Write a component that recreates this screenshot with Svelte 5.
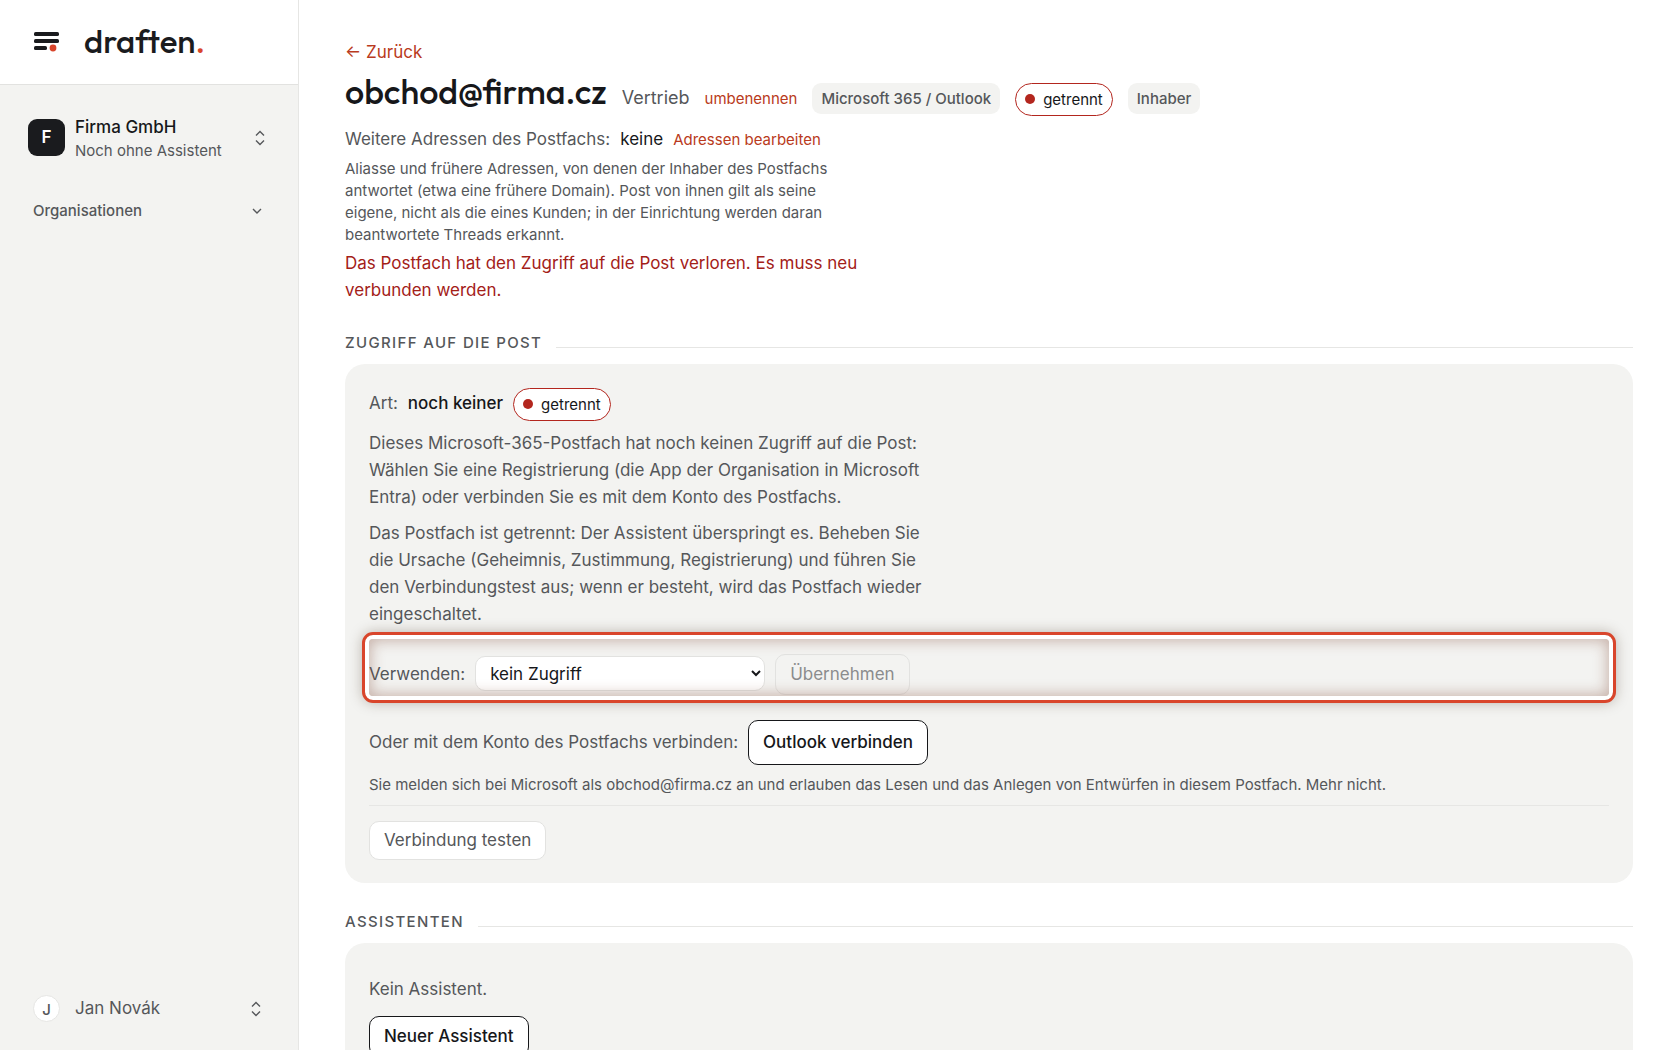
<script lang="ts">
    const organisation = { name: 'Firma GmbH', initial: 'F', note: 'Noch ohne Assistent' };
    const user = { name: 'Jan Novák', initial: 'J' };
    const mailbox = { address: 'obchod@firma.cz', label: 'Vertrieb', provider: 'Microsoft 365 / Outlook', role: 'Inhaber' };

    let access = 'none';
    let savedAccess = 'none';
</script>

{#snippet updown()}
    <svg class="icon" width="12" height="18" viewBox="0 0 12 18" aria-hidden="true">
        <path d="M2 6.5 6 2.5 10 6.5M2 11.5 6 15.5 10 11.5" />
    </svg>
{/snippet}

{#snippet disconnected()}
    <span class="status"><i></i>getrennt</span>
{/snippet}

<div class="layout">
    <aside>
        <header>
            <button class="menu" aria-label="Menü">
                <svg width="25" height="18" viewBox="0 0 25 18" aria-hidden="true">
                    <rect x="0" y="0" width="25" height="4" rx="1.6" />
                    <rect x="0" y="7" width="25" height="4" rx="1.6" />
                    <rect x="0" y="14" width="13" height="4" rx="1.6" />
                    <circle cx="19" cy="16" r="3.4" />
                </svg>
            </button>
            <a class="logo" href="#home">draften<span>.</span></a>
        </header>

        <button class="org">
            <span class="avatar">{organisation.initial}</span>
            <span class="org-text">
                <strong>{organisation.name}</strong>
                <small>{organisation.note}</small>
            </span>
            {@render updown()}
        </button>

        <button class="group">
            Organisationen
            <svg class="icon" width="12" height="8" viewBox="0 0 12 8" aria-hidden="true">
                <path d="M2 2 6 6 10 2" />
            </svg>
        </button>

        <button class="user">
            <span class="initial">{user.initial}</span>
            <span class="user-name">{user.name}</span>
            {@render updown()}
        </button>
    </aside>

    <main>
        <a class="back" href="#back">← Zurück</a>

        <div class="title">
            <h1>{mailbox.address}</h1>
            <span class="label">{mailbox.label}</span>
            <a class="small" href="#rename">umbenennen</a>
            <span class="tag">{mailbox.provider}</span>
            {@render disconnected()}
            <span class="tag">{mailbox.role}</span>
        </div>

        <div class="line addresses">
            <span>Weitere Adressen des Postfachs:</span>
            <span class="value">keine</span>
            <a class="small" href="#addresses">Adressen bearbeiten</a>
        </div>
        <p class="hint narrow">
            Aliasse und frühere Adressen, von denen der Inhaber des Postfachs antwortet (etwa eine frühere
            Domain). Post von ihnen gilt als seine eigene, nicht als die eines Kunden; in der Einrichtung
            werden daran beantwortete Threads erkannt.
        </p>
        <p class="error">Das Postfach hat den Zugriff auf die Post verloren. Es muss neu verbunden werden.</p>

        <h2>Zugriff auf die Post</h2>
        <section>
            <div class="line">
                <span>Art:</span>
                <strong>noch keiner</strong>
                {@render disconnected()}
            </div>
            <p>
                Dieses Microsoft-365-Postfach hat noch keinen Zugriff auf die Post: Wählen Sie eine
                Registrierung (die App der Organisation in Microsoft Entra) oder verbinden Sie es mit dem
                Konto des Postfachs.
            </p>
            <p>
                Das Postfach ist getrennt: Der Assistent überspringt es. Beheben Sie die Ursache (Geheimnis,
                Zustimmung, Registrierung) und führen Sie den Verbindungstest aus; wenn er besteht, wird das
                Postfach wieder eingeschaltet.
            </p>

            <form class="line highlight" on:submit|preventDefault={() => (savedAccess = access)}>
                <label for="access">Verwenden:</label>
                <select id="access" bind:value={access}>
                    <option value="none">kein Zugriff</option>
                    <option value="app">App der Organisation</option>
                </select>
                <button class="button apply" disabled={access === savedAccess}>Übernehmen</button>
            </form>

            <div class="line connect">
                <span>Oder mit dem Konto des Postfachs verbinden:</span>
                <button class="button primary">Outlook verbinden</button>
            </div>
            <p class="hint">
                Sie melden sich bei Microsoft als {mailbox.address} an und erlauben das Lesen und das Anlegen
                von Entwürfen in diesem Postfach. Mehr nicht.
            </p>
            <div class="test">
                <button class="button">Verbindung testen</button>
            </div>
        </section>

        <h2>Assistenten</h2>
        <section class="assistants">
            <p>Kein Assistent.</p>
            <button class="button primary">Neuer Assistent</button>
        </section>
    </main>
</div>

<style>
    :global(body) {
        background: #fff;
        color: #16171a;
        font: 17px/27px Inter, "Liberation Sans", sans-serif;
    }
    * {
        box-sizing: border-box;
    }
    .layout {
        display: grid;
        grid-template-columns: 299px 1fr;
        grid-template-rows: 100vh;
    }
    button, select {
        font: inherit;
        color: inherit;
    }
    a {
        color: #b93a20;
        text-decoration: none;
    }
    h1, h2, p {
        margin: 0;
        font-weight: 400;
    }
    strong {
        font-weight: 500;
        color: #16171a;
    }

    aside {
        display: flex;
        flex-direction: column;
        background: #f3f3f1;
        border-right: 1px solid #e6e6e4;
        color: #55575a;
    }
    aside button {
        display: flex;
        align-items: center;
        border: 0;
        background: none;
        text-align: left;
    }
    header {
        display: flex;
        align-items: center;
        gap: 25px;
        height: 85px;
        padding: 0 34px 2px;
        background: #fff;
        border-bottom: 1px solid #e2e2e0;
    }
    header .menu {
        padding: 0;
        fill: #1a1b1e;
    }
    .menu svg {
        overflow: visible;
    }
    .menu circle {
        fill: #d9452b;
    }
    .logo {
        color: #1a1b1e;
        font: 500 33px/40px Outfit, Lato, sans-serif;
    }
    .logo span {
        color: #d9452b;
    }
    .icon {
        fill: none;
        stroke: #55575a;
        stroke-width: 1.4;
    }
    .org {
        gap: 10px;
        margin: 27px 0 0;
        padding: 0 32px 0 28px;
    }
    .avatar {
        display: grid;
        place-items: center;
        width: 37px;
        height: 37px;
        border-radius: 9px;
        background: #1a1b1e;
        color: #fff;
        font-weight: 600;
    }
    .org-text {
        display: grid;
        flex: 1;
        padding-top: 3px;
        line-height: 24px;
    }
    .org-text small {
        font-size: 15px;
    }
    .group {
        justify-content: space-between;
        margin-top: 34px;
        padding: 0 35px 0 33px;
        font-size: 15px;
        font-weight: 500;
    }
    .user {
        gap: 15px;
        margin: auto 0 28px;
        padding: 0 36px 0 33px;
    }
    .initial {
        display: grid;
        place-items: center;
        width: 27px;
        height: 27px;
        border: 1px solid #e6e6e4;
        border-radius: 50%;
        background: #fff;
        font-size: 15px;
        font-weight: 500;
    }
    .user-name {
        flex: 1;
    }

    main {
        overflow: hidden;
        padding: 39px 47px 0 46px;
        color: #55575a;
    }
    .back {
        display: block;
    }
    .title {
        display: flex;
        align-items: baseline;
        gap: 15px;
        margin-top: 4px;
    }
    h1 {
        color: #16171a;
        font: 500 34px/44px Outfit, Lato, sans-serif;
    }
    .label {
        font-size: 18px;
    }
    .small {
        font-size: 15px;
    }
    .tag {
        padding: 2px 9px;
        border-radius: 9px;
        background: #f3f3f1;
        font-size: 15px;
        font-weight: 500;
    }
    .status {
        display: inline-flex;
        align-items: center;
        gap: 8px;
        padding: 2px 9px;
        border: 1px solid #b3261e;
        border-radius: 17px;
        background: #fff;
        color: #16171a;
        font-size: 15px;
    }
    .status i {
        width: 10px;
        height: 10px;
        border-radius: 50%;
        background: #b3261e;
    }
    .line {
        display: flex;
        align-items: baseline;
        gap: 10px;
    }
    .addresses {
        margin-top: 10px;
    }
    .value {
        color: #16171a;
    }
    .hint {
        font-size: 15px;
        line-height: 22px;
    }
    .narrow {
        max-width: 500px;
        margin-top: 5px;
    }
    .error {
        max-width: 560px;
        margin-top: 4px;
        color: #a32018;
    }
    h2 {
        display: flex;
        align-items: baseline;
        gap: 14px;
        margin: 25px 0 8px;
        font-size: 15px;
        font-weight: 500;
        letter-spacing: 0.09em;
        text-transform: uppercase;
    }
    h2::after {
        content: "";
        flex: 1;
        border-top: 1px solid #e6e6e4;
    }
    section {
        padding: 24px 24px 23px;
        border-radius: 20px;
        background: #f3f3f1;
    }
    section p:not(.hint) {
        max-width: 576px;
        margin-top: 9px;
    }
    .highlight {
        position: relative;
        margin-top: 11px;
        padding: 15px 0 1px;
    }
    /* ring and glow lie over the controls */
    .highlight::after {
        content: "";
        position: absolute;
        inset: 0;
        border-radius: 4px;
        outline: 3px solid #d9452b;
        outline-offset: 4px;
        box-shadow: 0 0 0 4px #fff, 0 0 14px 6px rgba(60, 40, 20, 0.35), inset 0 0 14px 2px rgba(120, 60, 40, 0.35);
        pointer-events: none;
    }
    select {
        width: 290px;
        height: 35px;
        padding: 0 10px;
        border: 1px solid #e2e2e0;
        border-radius: 10px;
        background: #fff;
        color: #16171a;
    }
    .button {
        padding: 5px 14px;
        border: 1px solid #e2e2e0;
        border-radius: 10px;
        background: #fff;
    }
    .apply {
        padding: 6px 14px;
        background: none;
    }
    .button:disabled {
        color: #8b8c8d;
    }
    .primary {
        padding: 6px 14px;
        border-color: #16171a;
        color: #16171a;
        font-weight: 500;
    }
    .connect {
        margin-top: 24px;
    }
    .connect .primary {
        padding: 8px 14px;
    }
    .connect + .hint {
        margin-top: 9px;
    }
    .test {
        margin-top: 9px;
        padding-top: 15px;
        border-top: 1px solid #e6e6e4;
    }
    .assistants p {
        margin-bottom: 13px;
    }
</style>
